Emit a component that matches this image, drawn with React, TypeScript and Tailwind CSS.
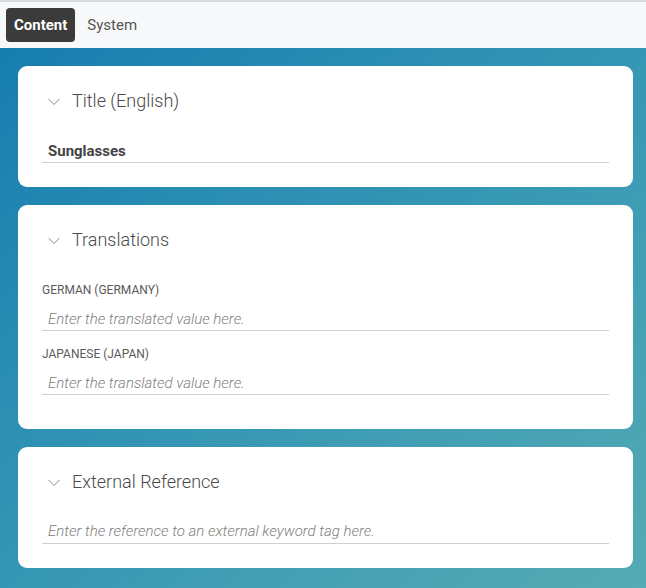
import React from "react";

const Chevron = () => (
  <svg width="12" height="8" viewBox="0 0 12 8" className="ml-[6px] mr-[12px] mt-[2px]" fill="none">
    <path d="M0.5 1 L6 6.5 L11.5 1" stroke="#8a8a8a" strokeWidth="1" />
  </svg>
);

const Header = ({ title }: { title: string }) => (
  <div className="h-[70px] flex items-center">
    <Chevron />
    <span className="text-[18px] font-light text-[#4a4a4a] leading-[28px]">{title}</span>
  </div>
);

const Placeholder = ({ text, className }: { text: string; className?: string }) => (
  <div className={"border-b border-[#d0d0d0] pl-[6px] " + (className ?? "")}>
    <span className="text-[15px] italic font-light text-[#808080] leading-[20px] block">{text}</span>
  </div>
);

export default function App() {
  return (
    <div className="w-[646px] h-[588px] flex flex-col" style={{ fontFamily: "Roboto, 'Liberation Sans', sans-serif" }}>
      <div className="h-[48px] shrink-0 bg-[#f7f8fa] border-t-2 border-[#d9dadc] flex items-center px-[6px] gap-[12px]">
        <div className="h-[34px] px-[8px] rounded-[4px] bg-[#3b3b3b] text-white font-bold text-[15px] flex items-center">Content</div>
        <div className="text-[15px] text-[#555555]">System</div>
      </div>
      <div className="flex-1 bg-gradient-to-br from-[#167db0] via-[#3597b4] to-[#55abb3] pl-[18px] pr-[13px] pt-[18px] flex flex-col gap-[18px]">
        <div className="bg-white rounded-[9px] px-[24px] pb-[24px]">
          <Header title="Title (English)" />
          <div className="mt-[5px] border-b border-[#d0d0d0] pl-[6px] pb-[1px]">
            <span className="text-[15px] font-bold text-[#444444] leading-[20px] block">Sunglasses</span>
          </div>
        </div>
        <div className="bg-white rounded-[9px] px-[24px] pb-[34px]">
          <Header title="Translations" />
          <div className="mt-[8px] text-[12px] leading-[14px] text-[#5a5a5a] uppercase">German (Germany)</div>
          <Placeholder text="Enter the translated value here." className="pt-[12px] pb-[1px]" />
          <div className="mt-[16px] text-[12px] leading-[14px] text-[#5a5a5a] uppercase">Japanese (Japan)</div>
          <Placeholder text="Enter the translated value here." className="pt-[12px] pb-[1px]" />
        </div>
        <div className="bg-white rounded-[9px] px-[24px] pb-[24px]">
          <Header title="External Reference" />
          <Placeholder text="Enter the reference to an external keyword tag here." className="mt-[4px] pb-[2px]" />
        </div>
      </div>
    </div>
  );
}
